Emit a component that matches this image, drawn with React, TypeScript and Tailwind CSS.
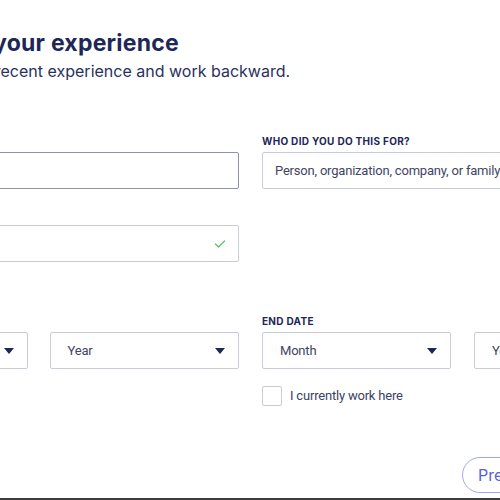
import React from 'react'

const labelCls = 'block text-[10px] leading-[14px] font-bold uppercase tracking-[0.03em] text-[#1d2758] mb-[4px] h-[14px]'
const inputBase = 'flex items-center h-[37px] bg-white border rounded-[2px] px-[12px] text-[13px] tracking-[-0.2px] text-[#3f4566] font-["Roboto",sans-serif]'

function Caret() {
  return (
    <svg width="10" height="6" viewBox="0 0 10 6" className="shrink-0">
      <path d="M0 0 L10 0 L5 6 Z" fill="#1d2758" />
    </svg>
  )
}

function Select({ label }: { label: string }) {
  return (
    <div className={`${inputBase} border-[#c9ccd6] pl-[17px] pr-[13px] justify-between`}>
      <span>{label}</span>
      <Caret />
    </div>
  )
}

export default function App() {
  return (
    <div className="relative w-[500px] h-[500px] overflow-hidden bg-white" style={{ fontFamily: 'Inter, "Open Sans", sans-serif' }}>
      <div className="ml-[-162px] w-[825px] pt-[29px]">
        {/* heading is anchored on its right edge so the crop matches */}
        <h1 className="w-[341px] text-right whitespace-nowrap text-[23px] leading-[28px] font-bold tracking-[0.01em] text-[#1d2758]">
          Tell us about your experience
        </h1>
        <p className="mt-[3px] w-[452px] text-right whitespace-nowrap text-[16px] leading-[22px] text-[#2a3160]">
          Start with your most recent experience and work backward.
        </p>

        <div className="grid grid-cols-2 gap-x-[23px] mt-[52px]">
          <div>
            <label className={labelCls}>Job title</label>
            <div className={`${inputBase} border-[#8e93a8]`}></div>
          </div>
          <div>
            <label className={labelCls}>Who did you do this for?</label>
            <div className={`${inputBase} border-[#c9ccd6] whitespace-nowrap overflow-hidden`}>
              Person, organization, company, or family business
            </div>
          </div>
        </div>

        <div className="grid grid-cols-2 gap-x-[23px] mt-[18px]">
          <div>
            <label className={labelCls}>Location</label>
            <div className={`${inputBase} border-[#c9ccd6] justify-end pr-[12px]`}>
              <svg width="12" height="10" viewBox="0 0 12 10">
                <path d="M1.5 5 L4.5 8 L10.5 2" fill="none" stroke="#5cc46a" strokeWidth="1.4" strokeLinecap="round" strokeLinejoin="round" />
              </svg>
            </div>
          </div>
          <div></div>
        </div>

        <div className="grid grid-cols-2 gap-x-[23px] mt-[52px]">
          <div>
            <label className={labelCls}>Start date</label>
            <div className="grid grid-cols-2 gap-x-[22px]">
              <Select label="Month" />
              <Select label="Year" />
            </div>
          </div>
          <div>
            <label className={labelCls}>End date</label>
            <div className="grid grid-cols-2 gap-x-[23px]">
              <Select label="Month" />
              <Select label="Year" />
            </div>
            <div className="flex items-center gap-[8px] mt-[17px]">
              <span className="w-[20px] h-[20px] border border-[#c9ccd6] rounded-[2px] bg-white"></span>
              <span className="text-[13px] tracking-[-0.2px] text-[#3c4263] font-['Roboto',sans-serif]">I currently work here</span>
            </div>
          </div>
        </div>

        <div className="flex mt-[51px] pl-[624px]">
          <button className="h-[36px] px-[15px] rounded-full border border-[#a3a6ec] text-[16px] text-[#5a5fd6] bg-white">
            Previous
          </button>
        </div>
      </div>
      <div className="absolute left-0 right-0 bottom-0 h-[2px] bg-[#3d3d3d]"></div>
    </div>
  )
}
